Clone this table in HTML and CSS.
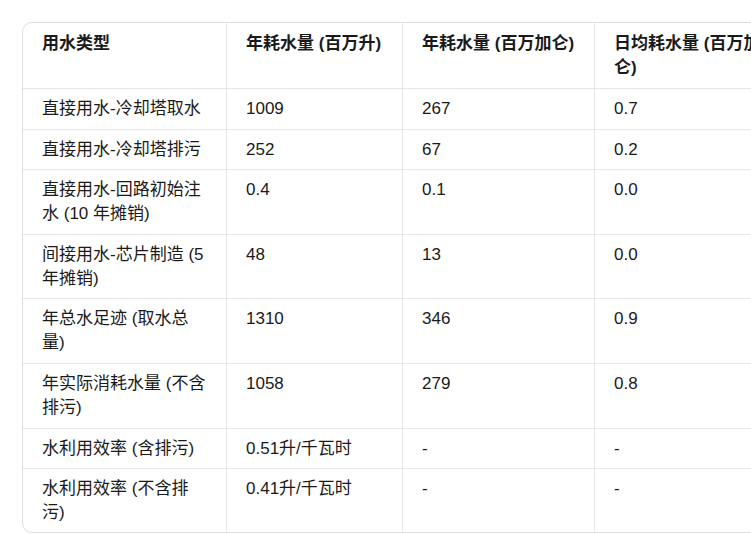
FILE: index.html
```html
<!DOCTYPE html>
<html lang="zh-CN">
<head>
<meta charset="utf-8">
<title>用水类型</title>
<link rel="stylesheet" href="styles.css">
</head>
<body>
<div class="page">
  <table class="water">
    <colgroup>
      <col class="c1"><col class="c2"><col class="c3"><col class="c4">
    </colgroup>
    <thead>
      <tr>
        <th class="k">用水类型</th>
        <th>年耗水量 (百万升)</th>
        <th>年耗水量 (百万加仑)</th>
        <th class="last">日均耗水量 (百万加仑)</th>
      </tr>
    </thead>
    <tbody>
      <tr><td class="k">直接用水-冷却塔取水</td><td>1009</td><td>267</td><td class="last">0.7</td></tr>
      <tr><td class="k">直接用水-冷却塔排污</td><td>252</td><td>67</td><td class="last">0.2</td></tr>
      <tr><td class="k">直接用水-回路初始注水 (10 年摊销)</td><td>0.4</td><td>0.1</td><td class="last">0.0</td></tr>
      <tr><td class="k">间接用水-芯片制造 (5 年摊销)</td><td>48</td><td>13</td><td class="last">0.0</td></tr>
      <tr><td class="k">年总水足迹 (取水总量)</td><td>1310</td><td>346</td><td class="last">0.9</td></tr>
      <tr><td class="k">年实际消耗水量 (不含排污)</td><td>1058</td><td>279</td><td class="last">0.8</td></tr>
      <tr><td class="k">水利用效率 (含排污)</td><td>0.51升/千瓦时</td><td>-</td><td class="last">-</td></tr>
      <tr class="end"><td class="k">水利用效率 (不含排污)</td><td>0.41升/千瓦时</td><td>-</td><td class="last">-</td></tr>
    </tbody>
  </table>
</div>
</body>
</html>
```
FILE: styles.css
```css
html, body {
  margin: 0;
  padding: 0;
  background: #ffffff;
  overflow: hidden;
}
.page {
  padding: 22px 0 0 22px;
  width: 900px;
}
.water {
  border-collapse: separate;
  border-spacing: 0;
  table-layout: fixed;
  width: 765px;
  border: 1px solid #dedede;
  border-radius: 10px;
  font-family: "Liberation Sans", "Noto Sans CJK SC", sans-serif;
  font-size: 17px;
  line-height: 24px;
  color: #1a1a1a;
}
.c1 { width: 204px; }
.c2 { width: 176px; }
.c3 { width: 192px; }
.c4 { width: 193px; }
.water th,
.water td {
  text-align: left;
  vertical-align: top;
  padding: 8px 10px 7.6px 19px;
  border-right: 1px solid #e6e6e6;
  border-bottom: 1px solid #e6e6e6;
}
.water .k {
  padding-right: 17px;
}
.water th {
  font-weight: 600;
  padding-top: 8.5px;
  padding-bottom: 8.5px;
}
.water .last {
  border-right: none;
  padding-right: 18px;
}
.water .end td {
  border-bottom: none;
  padding-bottom: 6.6px;
}
```
